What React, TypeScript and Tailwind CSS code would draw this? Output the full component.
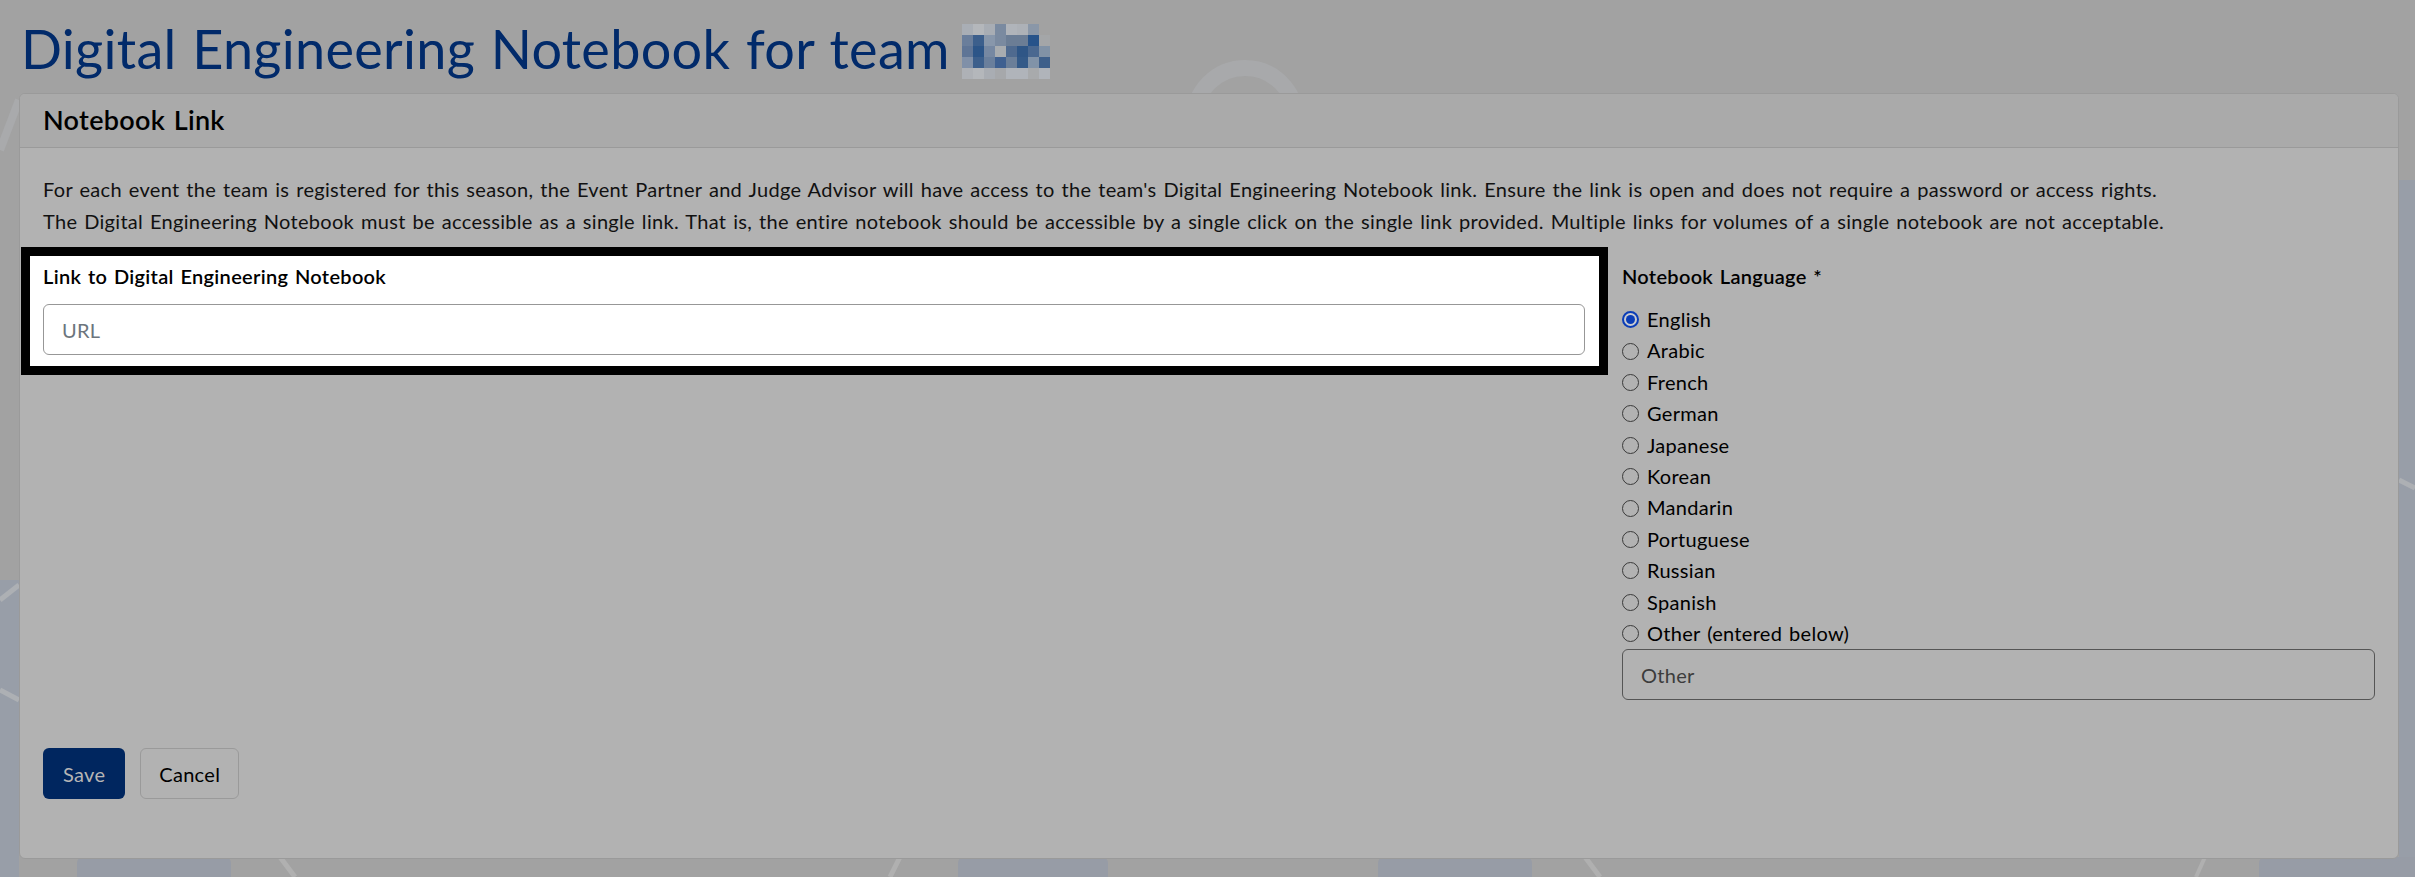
import { useState } from "react";

const LANGUAGES = [
	"English",
	"Arabic",
	"French",
	"German",
	"Japanese",
	"Korean",
	"Mandarin",
	"Portuguese",
	"Russian",
	"Spanish",
	"Other (entered below)",
];

// blurred team number, column by column (5 rows each)
const PIXELS = [
	["bg-[#a9aeb5]", "bg-[#6a7e9b]", "bg-[#5f7596]", "bg-[#8090a8]", "bg-[#aeb1b6]"],
	["bg-[#b4b7bb]", "bg-[#3c5f8c]", "bg-[#2c5588]", "bg-[#3c5f8c]", "bg-[#b4b7bb]"],
	["bg-[#a8adb4]", "bg-[#8897ab]", "bg-[#7688a2]", "bg-[#6a7f9c]", "bg-[#a9adb3]"],
	["bg-[#7a8aa0]", "bg-[#7a8aa0]", "bg-[#a8acb0]", "bg-[#3f6090]", "bg-[#a6a8ab]"],
	["bg-[#b0b4ba]", "bg-[#6b7d95]", "bg-[#4f6a8f]", "bg-[#6b7f99]", "bg-[#b0b4ba]"],
	["bg-[#adb1b7]", "bg-[#6b7d95]", "bg-[#2f5686]", "bg-[#345a88]", "bg-[#b0b4ba]"],
	["bg-[#8a97a8]", "bg-[#27538a]", "bg-[#4a6890]", "bg-[#8193a8]", "bg-[#a8aaac]"],
	["bg-[#a2a2a2]", "bg-[#a4a6a8]", "bg-[#8192a6]", "bg-[#3e5f8a]", "bg-[#b0b4ba]"],
];

function Backdrop() {
	return (
		<svg
			className="pointer-events-none absolute inset-0 h-full w-full"
			viewBox="0 0 2415 877"
			preserveAspectRatio="none"
		>
			<circle cx="1245" cy="119" r="51" fill="none" stroke="#a8a9ab" strokeWidth="16" />
			<line x1="0" y1="150" x2="19" y2="100" stroke="#a9aaac" strokeWidth="8" />
			<rect x="0" y="580" width="19" height="300" fill="#989ea8" />
			<line x1="0" y1="600" x2="19" y2="585" stroke="#adb0b4" strokeWidth="5" />
			<line x1="0" y1="690" x2="19" y2="700" stroke="#adb0b4" strokeWidth="5" />
			<rect x="2399" y="180" width="16" height="700" fill="#989ea8" />
			<line x1="2399" y1="480" x2="2415" y2="488" stroke="#adb0b4" strokeWidth="5" />
			<rect x="77" y="857" width="154" height="30" rx="6" fill="#979ca6" />
			<rect x="958" y="857" width="150" height="30" rx="6" fill="#979ca6" />
			<rect x="1378" y="857" width="154" height="30" rx="6" fill="#979ca6" />
			<rect x="2259" y="857" width="160" height="30" rx="6" fill="#979ca6" />
			<line x1="280" y1="857" x2="295" y2="877" stroke="#b0b0b0" strokeWidth="5" />
			<line x1="900" y1="857" x2="890" y2="877" stroke="#b0b0b0" strokeWidth="5" />
			<line x1="1585" y1="857" x2="1600" y2="877" stroke="#b0b0b0" strokeWidth="5" />
			<line x1="2205" y1="857" x2="2196" y2="877" stroke="#b0b0b0" strokeWidth="4" />
		</svg>
	);
}

function Radio({ checked }: { checked: boolean }) {
	return checked ? (
		<span className="flex h-[17px] w-[17px] shrink-0 items-center justify-center rounded-full border-2 border-[#0b3db7] bg-[#c9cbd0]">
			<span className="h-[9px] w-[9px] rounded-full bg-[#0b3db7]" />
		</span>
	) : (
		<span className="h-[17px] w-[17px] shrink-0 rounded-full border-[1.5px] border-[#3a3a3a]" />
	);
}

export default function App() {
	const [lang, setLang] = useState("English");

	return (
		<div className="relative h-[877px] overflow-hidden bg-[#a2a2a2] font-['Lato','Liberation_Sans',sans-serif] tracking-[0.3px] text-black [word-spacing:1.5px]">
			<Backdrop />
			<div className="relative pl-[19px] pr-[16px] pt-[16px]">
				<h1 className="mb-[11px] flex items-center text-[54px] leading-[66px] text-[#012a6a]">
					<span className="pl-[2px]">Digital Engineering Notebook for team</span>
					<span className="ml-[12px] mt-[4px] grid grid-flow-col grid-cols-[repeat(8,11px)] grid-rows-[repeat(5,11px)]">
						{PIXELS.flat().map((c, i) => (
							<span key={i} className={c} />
						))}
					</span>
				</h1>

				<section className="overflow-hidden rounded-[6px] border border-[#9a9a9a] bg-[#b2b2b2]">
					<div className="flex h-[54px] items-center border-b border-[#9a9a9a] bg-[#aaaaaa] px-[23px]">
						<h5 className="text-[27px] font-semibold">Notebook Link</h5>
					</div>

					<div className="pb-[59px] pl-[23px] pr-[23px] pt-[25px]">
						<p className="text-[20px] leading-[32px] text-[#111]">
							For each event the team is registered for this season, the Event Partner and Judge Advisor will have
							access to the team's Digital Engineering Notebook link. Ensure the link is open and does not require a
							password or access rights.
							<br />
							The Digital Engineering Notebook must be accessible as a single link. That is, the entire notebook should
							be accessible by a single click on the single link provided. Multiple links for volumes of a single
							notebook are not acceptable.
						</p>

						<div className="mt-[10px] grid grid-cols-[1542px_1fr] items-start gap-x-[37px]">
							<div className="-ml-[22px] -mr-[23px] border-[9px] border-black bg-white pb-[11px] pl-[13px] pr-[14px] pt-[8px]">
								<label className="mb-[16px] block text-[20px] font-semibold leading-[24px]">
									Link to Digital Engineering Notebook
								</label>
								<input
									placeholder="URL"
									className="block h-[51px] w-full rounded-[6px] border border-[#979797] bg-white px-[18px] text-[20px] outline-none placeholder:text-[#6c757d]"
								/>
							</div>

							<div className="pt-[17px]">
								<div className="mb-[16px] text-[20px] font-semibold leading-[24px]">Notebook Language *</div>
								{LANGUAGES.map((l) => (
									<div
										key={l}
										onClick={() => setLang(l)}
										className="flex cursor-pointer items-center gap-[8px] text-[20px] leading-[31.4px]"
									>
										<Radio checked={lang === l} />
										<span>{l}</span>
									</div>
								))}
								<input
									placeholder="Other"
									className="block h-[51px] w-full rounded-[6px] border border-[#555] bg-transparent px-[18px] text-[20px] outline-none placeholder:text-[#3c3c3c]"
								/>
							</div>
						</div>

						<div className="mt-[48px] flex gap-[15px]">
							<button className="h-[51px] rounded-[6px] bg-[#00265f] px-[20px] text-[20px] text-[#b5b5b5]">Save</button>
							<button className="h-[51px] rounded-[6px] border border-[#9a9a9a] px-[18px] text-[20px] text-black">
								Cancel
							</button>
						</div>
					</div>
				</section>
			</div>
		</div>
	);
}
